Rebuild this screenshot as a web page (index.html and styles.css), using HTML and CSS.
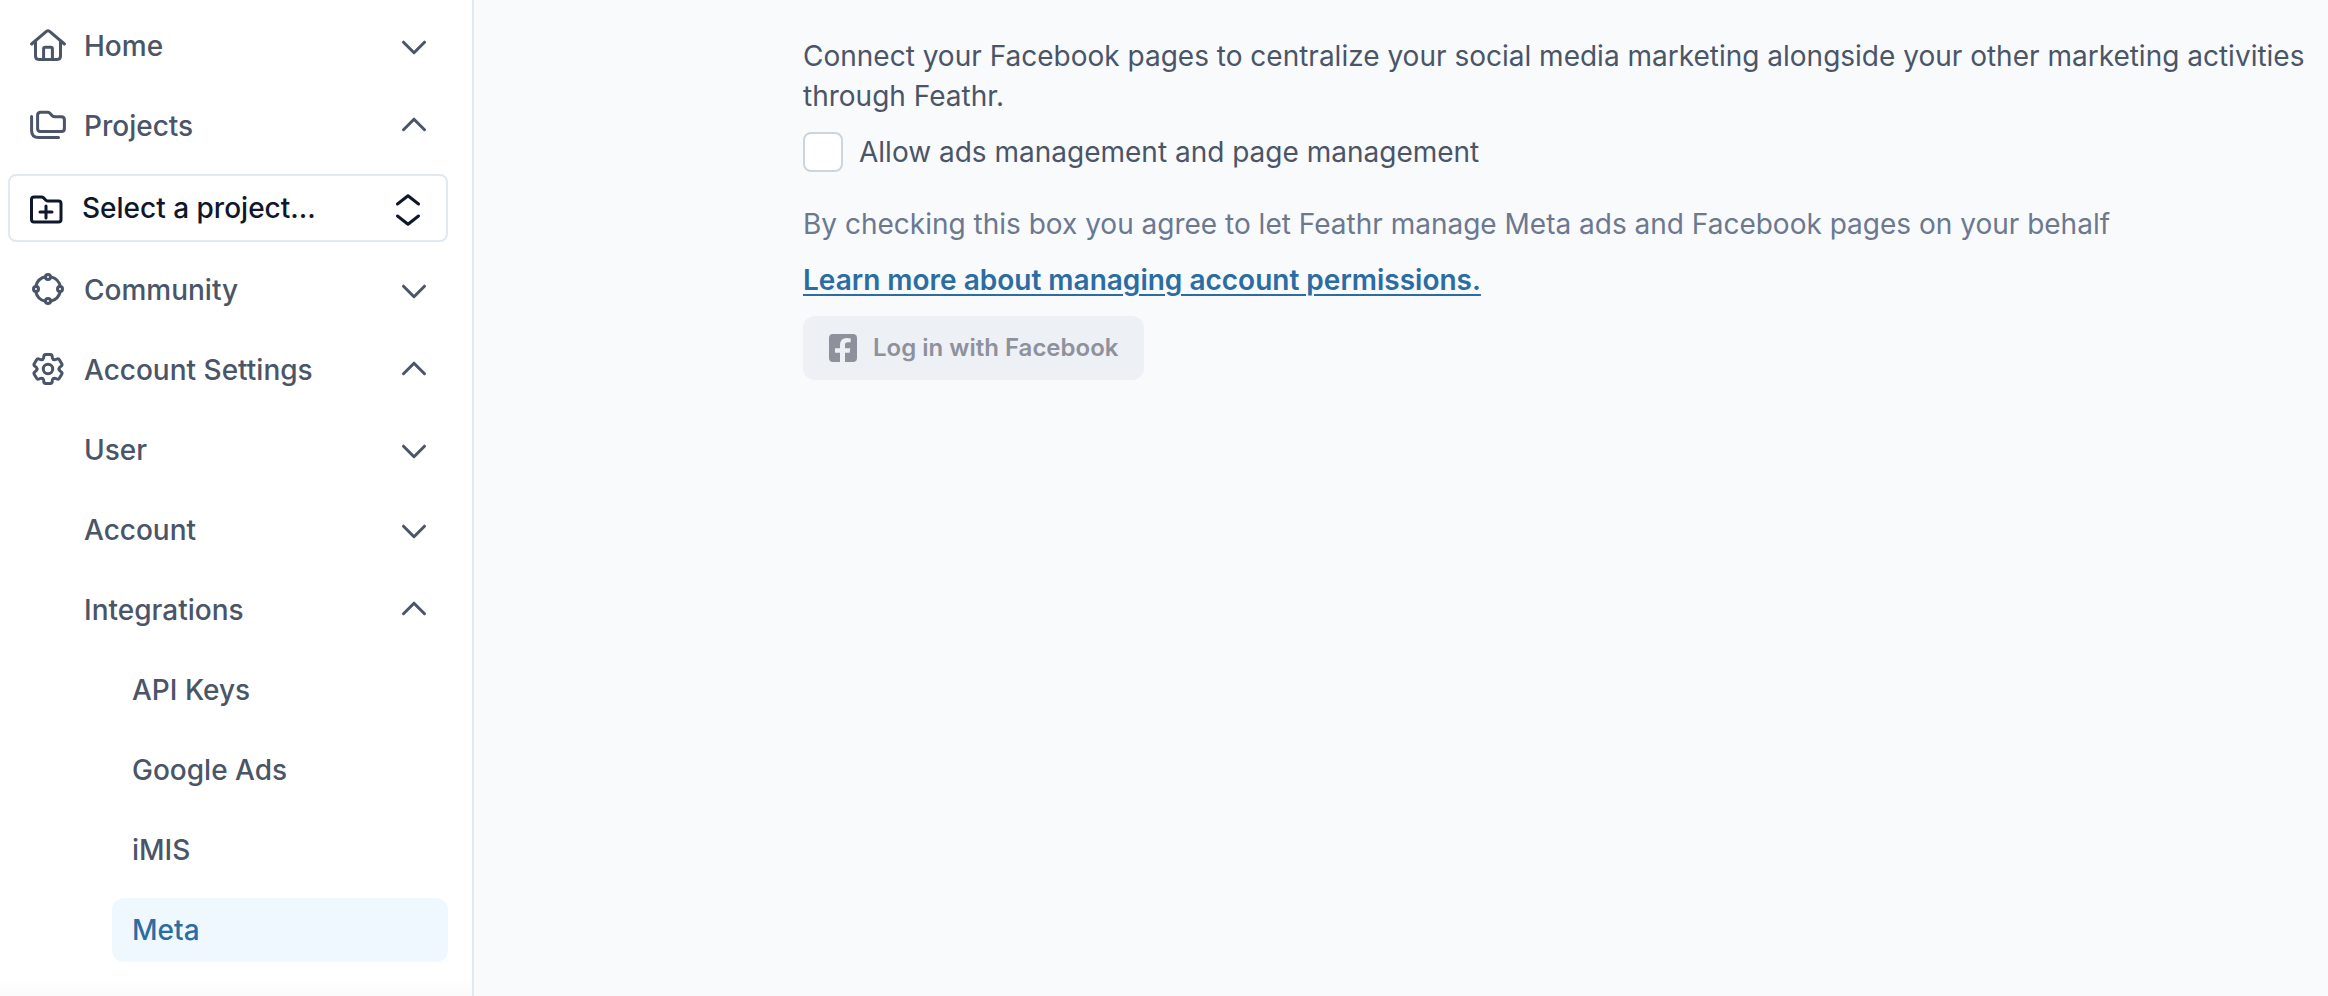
FILE: index.html
```html
<!DOCTYPE html>
<html lang="en">
<head>
    <meta charset="utf-8">
    <meta name="viewport" content="width=device-width, initial-scale=1">
    <title>Meta - Integrations</title>
    <link rel="stylesheet" href="styles.css">
</head>

<body>
    <!-- shared icons -->
    <svg class="sprite" aria-hidden="true">
        <symbol id="chevron-down" viewBox="0 0 32 32">
            <path d="M5.5 12.2 16 22.7l10.500-10.500"/>
        </symbol>
        <symbol id="chevron-up" viewBox="0 0 32 32">
            <path d="M5.5 19.700 16 9.200l10.500 10.500"/>
        </symbol>
    </svg>

    <aside class="sidebar">
        <nav class="nav">
            <button class="nav-item" type="button" aria-expanded="false">
                <svg class="icon" viewBox="0 0 36 36">
                    <path d="M1.6 16 16.700 3.200q1.300-1 2.600 0L34.400 16"/>
                    <path d="M5.500 13v15q0 3.400 3.400 3.400h18.200q3.400 0 3.400-3.400V13"/>
                    <path d="M13.600 31V21q0-1.700 1.700-1.700h5.400q1.700 0 1.700 1.700v10"/>
                </svg>
                <span>Home</span>
                <svg class="chevron"><use href="#chevron-down"/></svg>
            </button>
            <button class="nav-item" type="button" aria-expanded="true">
                <svg class="icon" viewBox="0 0 36 36">
                    <path d="M1.600 8.500v14q0 7.100 7.100 7.100H28.500"/>
                    <path d="M7.600 7.300q0-3 3-3h6.800q1.500 0 2.500 1l2.200 2.300q1.200 1.200 3 1.200h6.300q3 0 3 3v8.600q0 3-3 3H10.600q-3 0-3-3z"/>
                </svg>
                <span>Projects</span>
                <svg class="chevron"><use href="#chevron-up"/></svg>
            </button>

            <div class="project-picker">
                <svg class="icon" viewBox="0 0 36 36">
                    <path d="M1.500 9.500q0-2.500 2.500-2.500h7.500q1.200 0 2.100.9l2.300 2.300q.9.900 2.200.9H28.500q2.500 0 2.500 2.500v16q0 2.500-2.500 2.500H4q-2.500 0-2.500-2.500z"/>
                    <path d="M16 16v12M10 22h12"/>
                </svg>
                <select class="project-select" aria-label="Project">
                    <option>Select a project...</option>
                </select>
                <svg class="icon" viewBox="0 0 36 36">
                    <path d="M7.500 14 18 5.800l10.500 8.200M7.500 26 18 34.200l10.500-8.200"/>
                </svg>
            </div>

            <button class="nav-item" type="button" aria-expanded="false">
                <svg class="icon" viewBox="0 0 36 36">
                    <circle cx="18" cy="17" r="12.500" stroke-dasharray="14.100 5.535" stroke-dashoffset="-2.767" stroke-linecap="butt"/>
                    <circle cx="18" cy="5" r="2.500"/>
                    <circle cx="30" cy="17" r="2.500"/>
                    <circle cx="18" cy="29" r="2.500"/>
                    <circle cx="6" cy="17" r="2.500"/>
                </svg>
                <span>Community</span>
                <svg class="chevron"><use href="#chevron-down"/></svg>
            </button>
            <button class="nav-item" type="button" aria-expanded="true">
                <svg class="icon" viewBox="0 0 36 36">
                    <g transform="translate(18 17)">
                        <path id="tooth" d="M-5.500-9.500Q-4.200-10.250-4.200-12.200-4.200-14.500-2.400-14.500H2.400Q4.200-14.500 4.200-12.200 4.200-10.250 5.500-9.500"/>
                        <use href="#tooth" transform="rotate(60)"/>
                        <use href="#tooth" transform="rotate(120)"/>
                        <use href="#tooth" transform="rotate(180)"/>
                        <use href="#tooth" transform="rotate(240)"/>
                        <use href="#tooth" transform="rotate(300)"/>
                        <circle r="4.700"/>
                    </g>
                </svg>
                <span>Account Settings</span>
                <svg class="chevron"><use href="#chevron-up"/></svg>
            </button>

            <button class="nav-item level-2" type="button" aria-expanded="false">
                <span>User</span>
                <svg class="chevron"><use href="#chevron-down"/></svg>
            </button>
            <button class="nav-item level-2" type="button" aria-expanded="false">
                <span>Account</span>
                <svg class="chevron"><use href="#chevron-down"/></svg>
            </button>
            <button class="nav-item level-2" type="button" aria-expanded="true">
                <span>Integrations</span>
                <svg class="chevron"><use href="#chevron-up"/></svg>
            </button>

            <a class="nav-item level-3" href="#">API Keys</a>
            <a class="nav-item level-3" href="#">Google Ads</a>
            <a class="nav-item level-3" href="#">iMIS</a>
            <a class="nav-item level-3 active" href="#" aria-current="page">Meta</a>
        </nav>
        <div class="scroll-shadow"></div>
    </aside>

    <main class="content">
        <p>Connect your Facebook pages to centralize your social media marketing alongside your other marketing activities through Feathr.</p>
        <div class="permission">
            <label class="check">
                <input type="checkbox" name="allow">
                <span>Allow ads management and page management</span>
            </label>
            <p class="help">By checking this box you agree to let Feathr manage Meta ads and Facebook pages on your behalf</p>
        </div>
        <a class="learn-more" href="#">Learn more about managing account permissions.</a>
        <button class="login" type="button" disabled>
            <svg viewBox="0 0 28 28" width="28" height="28">
                <path fill="currentColor" d="M4 0h20a4 4 0 0 1 4 4v20a4 4 0 0 1-4 4h-8v-9.300h4.600l.7-4.400H16v-3.500q0-2.500 2.500-2.500h3.200V4.400q-1.500-.4-3.700-.4-7 0-7 7v3.300H6v4.400h5V28H4a4 4 0 0 1-4-4V4a4 4 0 0 1 4-4z"/>
            </svg>
            Log in with Facebook
        </button>
    </main>
</body>
</html>
```
FILE: styles.css
```css
* {
    box-sizing: border-box;
}

body {
    margin: 0;
    font-family: 'Inter', sans-serif;
    font-size: 28px;
    line-height: 40px;
    color: #4a5568;
    background-color: #f9fafc;
    display: flex;
    min-height: 100vh;
}

.sprite {
    display: none;
}

/* Sidebar */
.sidebar {
    flex: none;
    width: 474px;
    display: flex;
    flex-direction: column;
    background-color: white;
    border-right: 2px solid #e2e8f0;
}

.nav {
    display: flex;
    flex-direction: column;
    gap: 16px;
    padding: 14px 24px 16px 8px;
}

.nav-item {
    display: flex;
    align-items: center;
    gap: 18px;
    height: 64px;
    padding: 0 18px 0 22px;
    border: none;
    border-radius: 12px;
    background: none;
    color: inherit;
    font: inherit;
    font-weight: 500;
    text-decoration: none;
    cursor: pointer;
}

.level-2 {
    padding-left: 76px;
}

.level-3 {
    margin-left: 104px;
    padding-left: 20px;
}

.nav-item:hover,
.active {
    background-color: #f0f8ff;
}

.active {
    color: #2b6ca3;
}

.icon,
.chevron {
    flex: none;
    width: 36px;
    height: 36px;
    fill: none;
    stroke: currentColor;
    stroke-width: 3;
    stroke-linecap: round;
    stroke-linejoin: round;
}

.chevron {
    width: 32px;
    height: 32px;
    margin-left: auto;
}

.project-picker {
    display: flex;
    align-items: center;
    gap: 16px;
    height: 68px;
    padding: 0 20px;
    border: 2px solid #e2e8f0;
    border-radius: 8px;
    color: #0f172a;
}

.project-select {
    appearance: none;
    flex: 1;
    min-width: 0;
    padding: 0;
    border: none;
    background: none;
    color: inherit;
    font: inherit;
    font-weight: 500;
}

.scroll-shadow {
    height: 16px;
    margin-top: auto;
    background: linear-gradient(to bottom, rgba(0, 0, 0, 0), rgba(0, 0, 0, 0.02));
}

/* Content */
.content {
    flex: 1;
    display: flex;
    flex-direction: column;
    align-items: flex-start;
    gap: 16px;
    padding: 36px 20px 36px 329px;
}

.content p {
    margin: 0;
}

.permission {
    display: flex;
    flex-direction: column;
    gap: 32px;
}

.check {
    display: flex;
    align-items: center;
    gap: 16px;
}

.check input {
    appearance: none;
    width: 40px;
    height: 40px;
    margin: 0;
    border: 2px solid #cbd5e1;
    border-radius: 8px;
    background-color: white;
}

.content .help {
    color: #6b7890;
}

.learn-more {
    color: #2b6ca3;
    font-weight: 600;
    text-underline-offset: 4px;
    text-decoration-thickness: 2px;
}

.login {
    display: flex;
    align-items: center;
    gap: 16px;
    height: 64px;
    padding: 0 26px;
    border: none;
    border-radius: 12px;
    background-color: #edf0f5;
    color: #8e919c;
    font: inherit;
    font-size: 24px;
    font-weight: 600;
}
```
